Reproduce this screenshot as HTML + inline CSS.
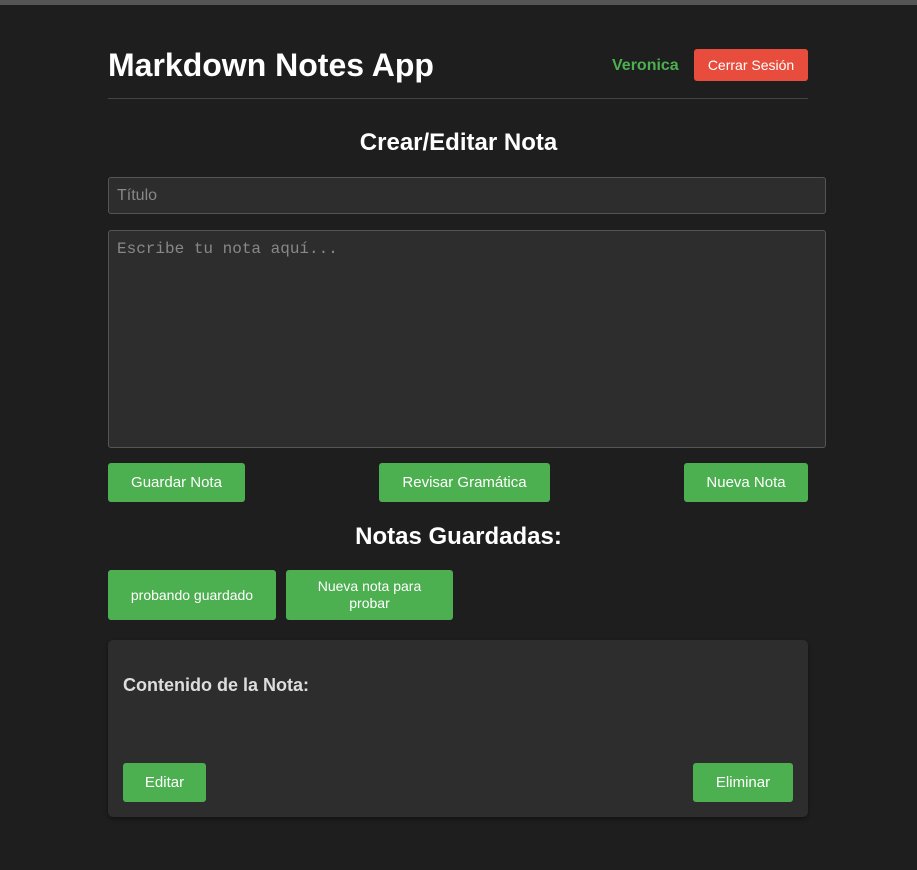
<!DOCTYPE html>
<html><head><meta charset="utf-8"><style>
*{box-sizing:border-box;margin:0;padding:0}
body{width:917px;height:870px;background:#1e1e1e;font-family:"Liberation Sans",sans-serif;position:relative;overflow:hidden}
.a{position:absolute}
.btn{position:absolute;background:#4caf50;color:#fff;border-radius:3px;display:flex;align-items:center;justify-content:center;text-align:center;font-family:"Liberation Sans Narrow","Liberation Sans",sans-serif;font-size:15px;line-height:17px}
.h{position:absolute;left:0;width:917px;text-align:center;color:#fff;font-weight:bold;font-size:24px}
</style></head><body>
<div class="a" style="left:0;top:0;width:917px;height:5px;background:#555"></div>
<div class="a" style="left:108px;top:45px;color:#fff;font-weight:bold;font-size:32px;line-height:40px">Markdown Notes App</div>
<div class="a" style="left:612px;top:57px;color:#4caf50;font-weight:bold;font-size:16px">Veronica</div>
<div class="btn" style="left:694px;top:49px;width:114px;height:32px;background:#e74c3c;font-size:14px">Cerrar Sesión</div>
<div class="a" style="left:108px;top:98px;width:700px;height:1px;background:#444"></div>
<div class="h" style="top:129px">Crear/Editar Nota</div>
<div class="a" style="left:108px;top:177px;width:718px;height:37px;background:#2d2d2d;border:1px solid #555;border-radius:3px;color:#888;font-family:'Liberation Sans Narrow','Liberation Sans',sans-serif;font-size:16px;padding:9px 8px">Título</div>
<div class="a" style="left:108px;top:230px;width:718px;height:218px;background:#2d2d2d;border:1px solid #555;border-radius:3px;color:#888;font-family:'Liberation Mono',monospace;font-size:16px;padding:9px 8px">Escribe tu nota aquí...</div>
<div class="btn" style="left:108px;top:463px;width:137px;height:39px">Guardar Nota</div>
<div class="btn" style="left:379px;top:463px;width:171px;height:39px">Revisar Gramática</div>
<div class="btn" style="left:684px;top:463px;width:124px;height:39px">Nueva Nota</div>
<div class="h" style="top:523px">Notas Guardadas:</div>
<div class="btn" style="left:108px;top:570px;width:168px;height:50px;font-size:14px">probando guardado</div>
<div class="btn" style="left:286px;top:570px;width:167px;height:50px;font-size:14px;padding:0 20px">Nueva nota para probar</div>
<div class="a" style="left:108px;top:640px;width:700px;height:177px;background:#2d2d2d;border-radius:5px;box-shadow:0 2px 5px rgba(0,0,0,.4)"></div>
<div class="a" style="left:123px;top:675px;color:#ddd;font-weight:bold;font-size:18px">Contenido de la Nota:</div>
<div class="btn" style="left:123px;top:763px;width:83px;height:39px">Editar</div>
<div class="btn" style="left:693px;top:763px;width:100px;height:39px">Eliminar</div>
</body></html>
